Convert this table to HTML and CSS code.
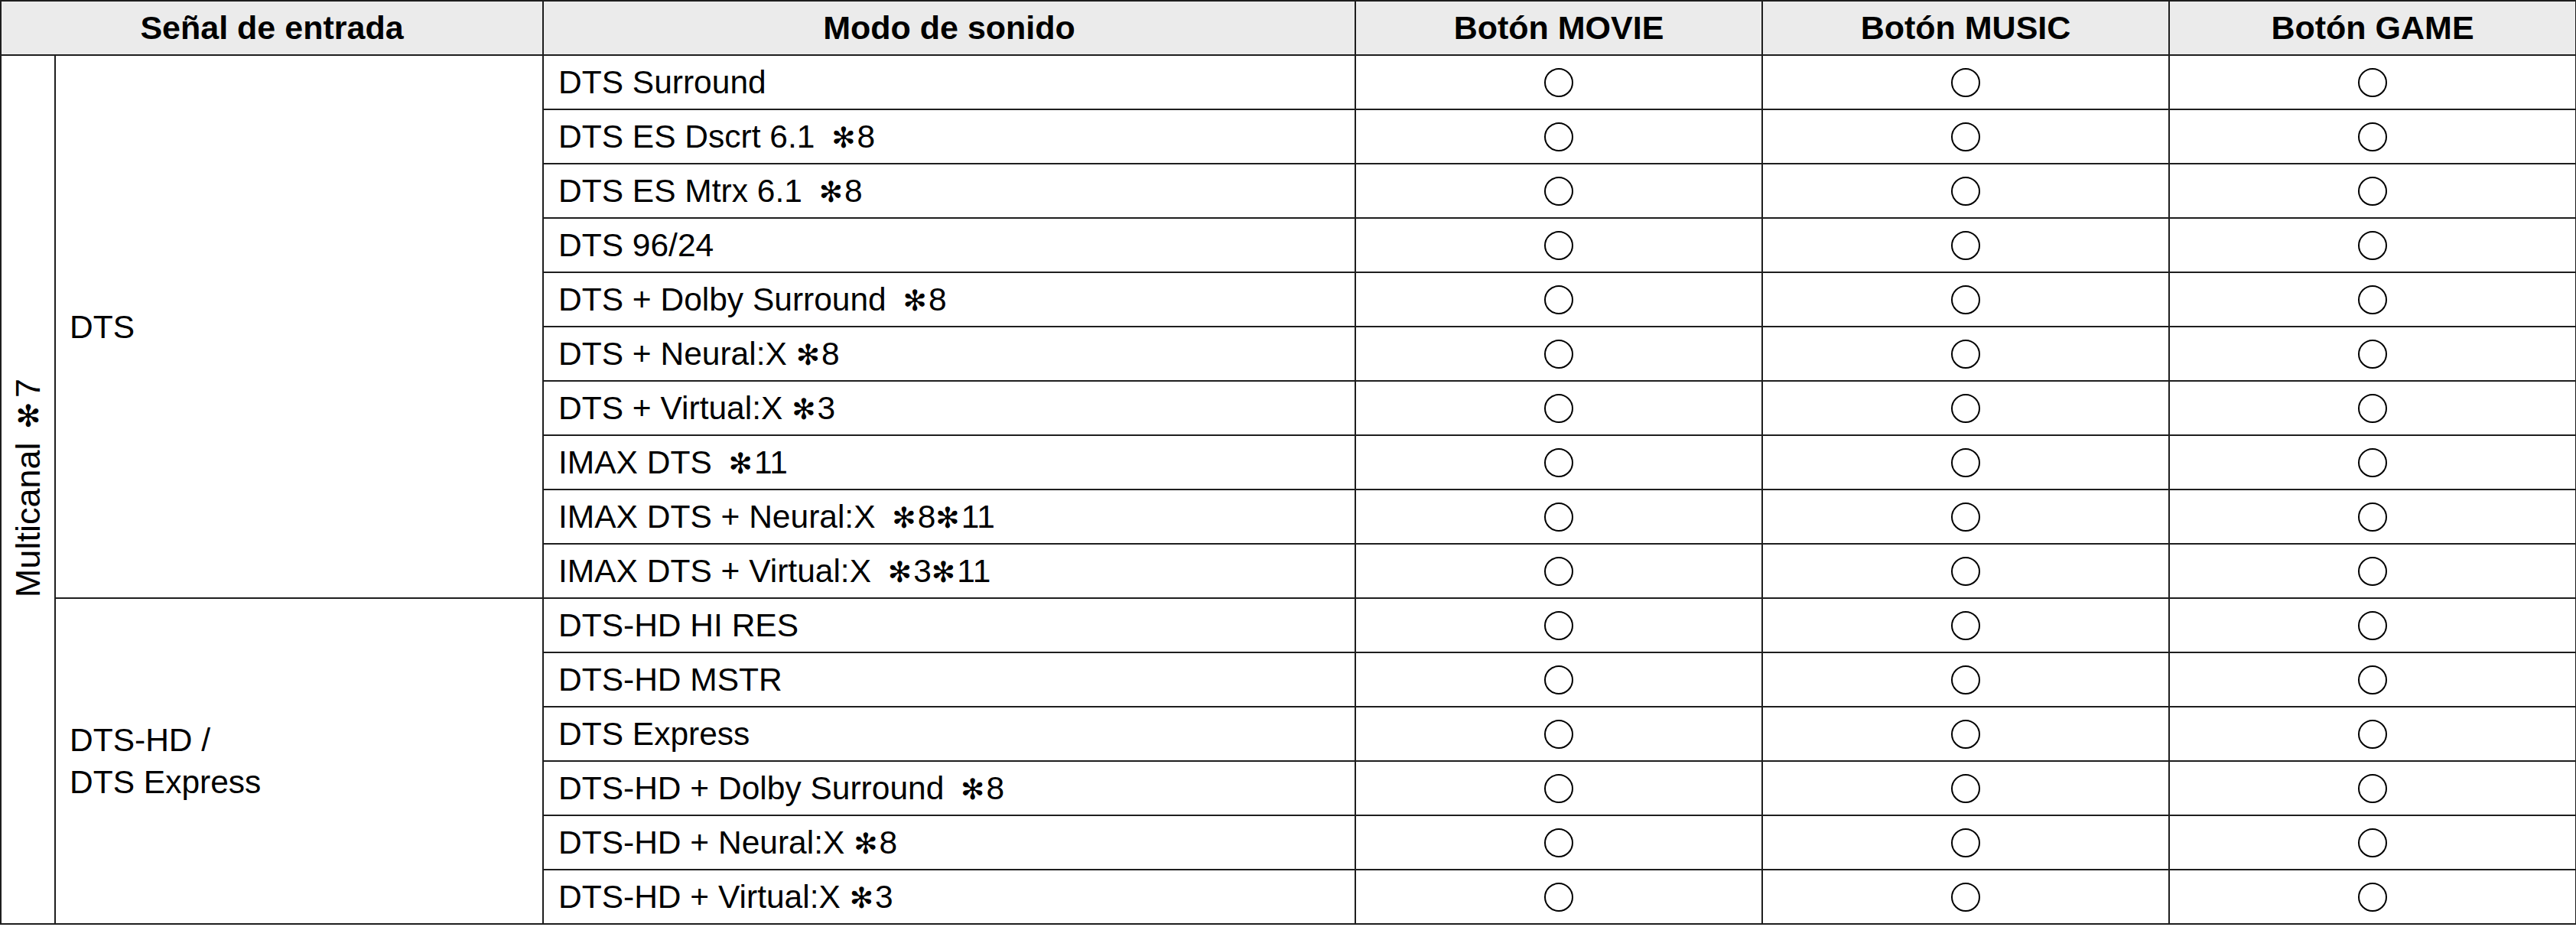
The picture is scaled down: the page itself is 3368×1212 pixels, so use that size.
FILE: index.html
```html
<!DOCTYPE html>
<html lang="es">
<head>
<meta charset="utf-8">
<title>Modos de sonido</title>
<link rel="stylesheet" href="styles.css">
</head>
<body>
<table class="grid">
  <colgroup>
    <col class="c-group">
    <col class="c-signal">
    <col class="c-mode">
    <col class="c-btn">
    <col class="c-btn">
    <col class="c-btn">
  </colgroup>
  <thead>
    <tr class="head">
      <th colspan="2">Señal de entrada</th>
      <th>Modo de sonido</th>
      <th>Botón MOVIE</th>
      <th>Botón MUSIC</th>
      <th>Botón GAME</th>
    </tr>
  </thead>
  <tbody>
    <tr>
      <td class="group" rowspan="16"><span class="vtext">Multicanal <span class="note">✻</span>7</span></td>
      <td class="sig" rowspan="10">DTS</td>
      <td class="mode">DTS Surround</td>
      <td class="mark"><span class="circle"></span></td><td class="mark"><span class="circle"></span></td><td class="mark"><span class="circle"></span></td>
    </tr>
    <tr>
      <td class="mode">DTS ES Dscrt 6.1 <span class="note gap">✻</span>8</td>
      <td class="mark"><span class="circle"></span></td><td class="mark"><span class="circle"></span></td><td class="mark"><span class="circle"></span></td>
    </tr>
    <tr>
      <td class="mode">DTS ES Mtrx 6.1 <span class="note gap">✻</span>8</td>
      <td class="mark"><span class="circle"></span></td><td class="mark"><span class="circle"></span></td><td class="mark"><span class="circle"></span></td>
    </tr>
    <tr>
      <td class="mode">DTS 96/24</td>
      <td class="mark"><span class="circle"></span></td><td class="mark"><span class="circle"></span></td><td class="mark"><span class="circle"></span></td>
    </tr>
    <tr>
      <td class="mode">DTS + Dolby Surround <span class="note gap">✻</span>8</td>
      <td class="mark"><span class="circle"></span></td><td class="mark"><span class="circle"></span></td><td class="mark"><span class="circle"></span></td>
    </tr>
    <tr>
      <td class="mode">DTS + Neural:X <span class="note">✻</span>8</td>
      <td class="mark"><span class="circle"></span></td><td class="mark"><span class="circle"></span></td><td class="mark"><span class="circle"></span></td>
    </tr>
    <tr>
      <td class="mode">DTS + Virtual:X <span class="note">✻</span>3</td>
      <td class="mark"><span class="circle"></span></td><td class="mark"><span class="circle"></span></td><td class="mark"><span class="circle"></span></td>
    </tr>
    <tr>
      <td class="mode">IMAX DTS <span class="note gap">✻</span>11</td>
      <td class="mark"><span class="circle"></span></td><td class="mark"><span class="circle"></span></td><td class="mark"><span class="circle"></span></td>
    </tr>
    <tr>
      <td class="mode">IMAX DTS + Neural:X <span class="note gap">✻</span>8<span class="note">✻</span>11</td>
      <td class="mark"><span class="circle"></span></td><td class="mark"><span class="circle"></span></td><td class="mark"><span class="circle"></span></td>
    </tr>
    <tr>
      <td class="mode">IMAX DTS + Virtual:X <span class="note gap">✻</span>3<span class="note">✻</span>11</td>
      <td class="mark"><span class="circle"></span></td><td class="mark"><span class="circle"></span></td><td class="mark"><span class="circle"></span></td>
    </tr>
    <tr>
      <td class="sig" rowspan="6">DTS-HD /<br>DTS Express</td>
      <td class="mode">DTS-HD HI RES</td>
      <td class="mark"><span class="circle"></span></td><td class="mark"><span class="circle"></span></td><td class="mark"><span class="circle"></span></td>
    </tr>
    <tr>
      <td class="mode">DTS-HD MSTR</td>
      <td class="mark"><span class="circle"></span></td><td class="mark"><span class="circle"></span></td><td class="mark"><span class="circle"></span></td>
    </tr>
    <tr>
      <td class="mode">DTS Express</td>
      <td class="mark"><span class="circle"></span></td><td class="mark"><span class="circle"></span></td><td class="mark"><span class="circle"></span></td>
    </tr>
    <tr>
      <td class="mode">DTS-HD + Dolby Surround <span class="note gap">✻</span>8</td>
      <td class="mark"><span class="circle"></span></td><td class="mark"><span class="circle"></span></td><td class="mark"><span class="circle"></span></td>
    </tr>
    <tr>
      <td class="mode">DTS-HD + Neural:X <span class="note">✻</span>8</td>
      <td class="mark"><span class="circle"></span></td><td class="mark"><span class="circle"></span></td><td class="mark"><span class="circle"></span></td>
    </tr>
    <tr>
      <td class="mode">DTS-HD + Virtual:X <span class="note">✻</span>3</td>
      <td class="mark"><span class="circle"></span></td><td class="mark"><span class="circle"></span></td><td class="mark"><span class="circle"></span></td>
    </tr>
  </tbody>
</table>
</body>
</html>
```
FILE: styles.css
```css
html, body {
  margin: 0;
  padding: 0;
  background: #ffffff;
}

body {
  font-family: "Liberation Sans", Arial, "Helvetica", sans-serif;
  color: #000000;
}

.grid {
  border-collapse: collapse;
  table-layout: fixed;
  width: 3367px;
}

.c-group { width: 71px; }
.c-signal { width: 638px; }
.c-mode { width: 1062px; }
.c-btn { width: 532px; }

.grid th,
.grid td {
  border: 2px solid #1e1e1e;
  padding: 0;
}

.grid tr {
  height: 71px;
}

.head th {
  background: #ebebeb;
  font-weight: bold;
  font-size: 43px;
  text-align: center;
  vertical-align: middle;
}

.mode {
  font-size: 42.5px;
  padding-left: 19px !important;
  white-space: nowrap;
  vertical-align: middle;
}

.sig {
  font-size: 42.5px;
  line-height: 55px;
  padding-left: 18px !important;
  vertical-align: middle;
}

.group {
  text-align: center;
  vertical-align: middle;
}

.vtext {
  display: inline-block;
  writing-mode: vertical-rl;
  transform: rotate(180deg);
  font-size: 45px;
  white-space: nowrap;
}

.note {
  font-family: "DejaVu Sans", sans-serif;
  font-size: 0.88em;
  margin-right: 2px;
}

.gap {
  margin-left: 10px;
}

.mark {
  text-align: center;
  vertical-align: middle;
}

.circle {
  display: inline-block;
  width: 34px;
  height: 34px;
  border: 2px solid #000000;
  border-radius: 50%;
  vertical-align: middle;
}
```
